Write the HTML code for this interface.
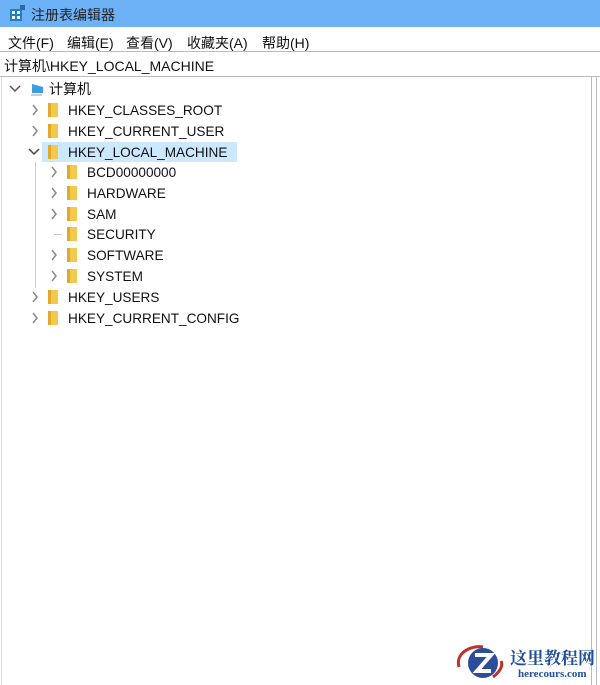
<!DOCTYPE html>
<html><head><style>
body{margin:0;width:600px;height:685px;background:#fff;position:relative;overflow:hidden;font-family:"Liberation Sans","Noto Sans CJK SC",sans-serif;color:#111}
.t{position:absolute;left:0;top:0;width:600px;height:27px;background:#6db1f7}
.t span{position:absolute;left:31px;top:5px;font-size:14px;color:#222}
.m{position:absolute;top:33px;font-size:14px}
.addr{position:absolute;left:0;top:51px;width:600px;height:24px;border-top:1px solid #bbb;border-bottom:1px solid #bbb}
.addr span{position:absolute;left:4px;top:4px;font-size:14px}
.r{position:absolute;font-size:13.6px;height:18px;line-height:18px}
.f{position:absolute;width:10px;height:14px;background:#f2c94c;border-left:3px solid #e0a92a;box-sizing:border-box}
.c{position:absolute}
</style></head><body>
<div class="t"><svg style="position:absolute;left:9px;top:5px" width="17" height="17"><rect x="1" y="4" width="12" height="12" fill="#1f7fc8"/><rect x="3" y="6" width="3" height="3" fill="#fff"/><rect x="8" y="6" width="3" height="3" fill="#fff"/><rect x="3" y="11" width="3" height="3" fill="#fff"/><rect x="8" y="11" width="3" height="3" fill="#fff"/><rect x="11" y="0" width="5" height="5" fill="#2a6aa8"/></svg><span>注册表编辑器</span></div>
<div class="m" style="left:8px">文件(F)</div><div class="m" style="left:67px">编辑(E)</div><div class="m" style="left:126px">查看(V)</div><div class="m" style="left:187px">收藏夹(A)</div><div class="m" style="left:262px">帮助(H)</div>
<div class="addr"><span>计算机\HKEY_LOCAL_MACHINE</span></div>
<div style="position:absolute;left:591px;top:77px;width:1px;height:608px;background:#bbb"></div>
<div style="position:absolute;left:596px;top:77px;width:1px;height:608px;background:#bbb"></div>
<div style="position:absolute;left:1px;top:77px;width:1px;height:608px;background:#ddd"></div>
<svg class="c" style="left:9px;top:84px" width="12" height="10"><polyline points="1,2 6,7 11,2" stroke="#555" stroke-width="1.5" fill="none"/></svg>
<svg style="position:absolute;left:30px;top:81px" width="16" height="16"><path d="M2 3 L13 6 L13 12 L2 12Z" fill="#3a9ee0"/><path d="M1 14 L12 14" stroke="#999"/></svg>
<div class="r" style="left:49px;top:80px;font-size:14px">计算机</div>
<div class="r" style="left:42px;top:142px;width:195px;height:20px;background:#cce8ff"></div>
<div style="position:absolute;left:35px;top:162px;width:1px;height:126px;background:#ccc"></div>
<div style="position:absolute;left:54px;top:234px;width:8px;height:1px;background:#ccc"></div>
<div id="tree"></div>
<script>
var rows=[[0,"HKEY_CLASSES_ROOT",110,1],[0,"HKEY_CURRENT_USER",131,1],[0,"HKEY_LOCAL_MACHINE",152,2],[1,"BCD00000000",172,1],[1,"HARDWARE",193,1],[1,"SAM",214,1],[1,"SECURITY",234,0],[1,"SOFTWARE",255,1],[1,"SYSTEM",276,1],[0,"HKEY_USERS",297,1],[0,"HKEY_CURRENT_CONFIG",318,1]];
var h="";rows.forEach(function(r){var x=r[0]?87:68,fx=r[0]?67:48,cx=r[0]?50:31;
if(r[3]==1)h+='<svg class="c" style="left:'+cx+'px;top:'+(r[2]-6)+'px" width="8" height="12"><polyline points="2,1 6,6 2,11" stroke="#888" stroke-width="1.5" fill="none"/></svg>';
if(r[3]==2)h+='<svg class="c" style="left:'+(cx-3)+'px;top:'+(r[2]-4)+'px" width="12" height="8"><polyline points="1,1 6,6 11,1" stroke="#444" stroke-width="1.5" fill="none"/></svg>';
h+='<div class="f" style="left:'+fx+'px;top:'+(r[2]-7)+'px"></div><div class="r" style="left:'+x+'px;top:'+(r[2]-8)+'px">'+r[1]+'</div>';});
document.getElementById("tree").innerHTML=h;
</script>
<svg style="position:absolute;left:453px;top:641px" width="60" height="42"><path d="M6 26 C2 12 18 4 30 6" stroke="#c0302a" stroke-width="3" fill="none"/><path d="M40 36 C48 30 50 24 48 20" stroke="#c0302a" stroke-width="3" fill="none"/><circle cx="30" cy="22" r="15" fill="#2b4d9a"/><path d="M22 14 H38 L24 30 H38" stroke="#fff" stroke-width="4" fill="none"/></svg>
<div style="position:absolute;left:510px;top:644px;font-family:'Noto Serif CJK SC',serif;font-weight:bold;font-size:17px;color:#1f4f9a">这里教程网</div>
<div style="position:absolute;left:518px;top:668px;font-family:'Liberation Serif',serif;font-weight:bold;font-size:11px;color:#1f4f9a">herecours.com</div>
</body></html>
